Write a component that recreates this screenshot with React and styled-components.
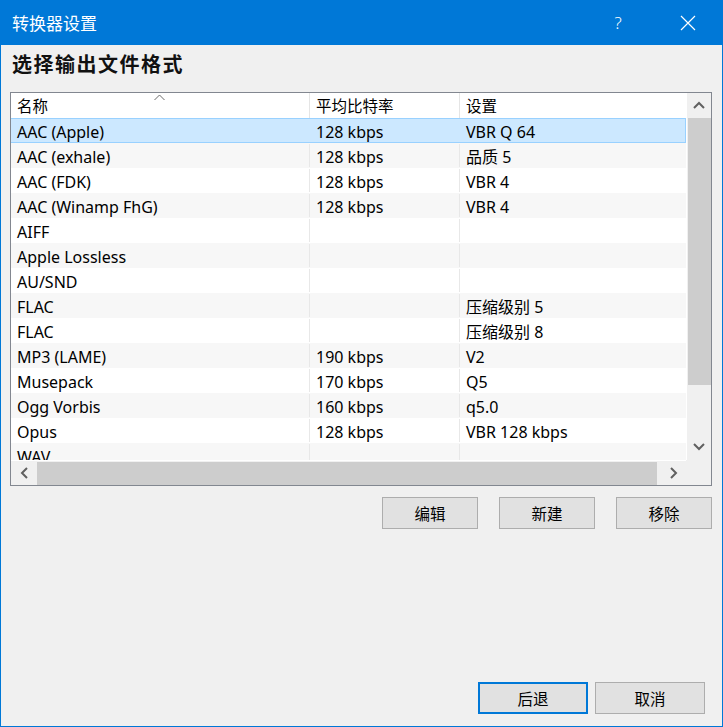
import React from 'react'
import styled, { createGlobalStyle } from 'styled-components'

const GlobalStyle = createGlobalStyle`
  html, body {
    margin: 0;
    padding: 0;
    background: #f0f0f0;
  }
  body {
    font-family: "Noto Sans", "Noto Sans CJK SC", sans-serif;
    font-size: 16px;
    color: #000;
  }
`

const Window = styled.div`
  width: 723px;
  height: 727px;
  box-sizing: border-box;
  border: 1px solid #0078d7;
  border-top: none;
  background: #f0f0f0;
  display: flex;
  flex-direction: column;
  overflow: hidden;
`

const TitleBar = styled.div`
  height: 45px;
  margin: 0 -1px;
  background: #0078d7;
  color: #fff;
  display: flex;
  align-items: center;
  padding: 0 0 0 12px;
  flex-shrink: 0;
`

const TitleText = styled.div`
  flex: 1;
  font-family: "Noto Sans CJK SC", sans-serif;
  font-size: 17px;
  margin-top: -1px;
`

const TitleBtn = styled.div`
  width: ${p => p.w}px;
  height: 45px;
  display: flex;
  align-items: center;
  justify-content: center;
  font-family: "Noto Sans", sans-serif;
  font-size: 17px;
  font-weight: 300;
  color: #fff;
`

const Body = styled.div`
  flex: 1;
  display: flex;
  flex-direction: column;
  padding: 0 11px 0 9px;
`

const Heading = styled.div`
  font-family: "Noto Sans CJK SC", sans-serif;
  font-weight: 700;
  font-size: 20px;
  letter-spacing: 1.5px;
  height: 47px;
  box-sizing: border-box;
  padding: 0 0 10px 2px;
  display: flex;
  align-items: center;
  color: #111;
`

const ListBox = styled.div`
  width: 702px;
  height: 394px;
  box-sizing: border-box;
  border: 1px solid #828790;
  background: #fff;
  display: grid;
  grid-template-columns: 675px 25px;
  grid-template-rows: 367px 25px;
`

const Viewport = styled.div`
  overflow: hidden;
`

const Row = styled.div`
  display: grid;
  grid-template-columns: 299px 150px 226px;
  height: 25px;
  box-sizing: border-box;
  background: ${p => (p.selected ? '#cce8ff' : p.alt ? '#f7f7f7' : '#fff')};
  border: 1px solid ${p => (p.selected ? '#99d1ff' : 'transparent')};
  border-left: none;
`

const HeaderRow = styled(Row)`
  background: #fff;
  border: none;
`

const Cell = styled.div`
  display: flex;
  align-items: center;
  padding: 3px 0 0 6px;
  white-space: nowrap;
  line-height: 1;
  border-right: 1px solid ${p => (p.last || p.selected ? 'transparent' : '#e8e8e8')};
`

const HeadCell = styled(Cell)`
  position: relative;
  font-family: "Noto Sans CJK SC", sans-serif;
  font-size: 15.5px;
  border-right-color: ${p => (p.last ? 'transparent' : '#e5e5e5')};
  padding-top: 1px;
`

const SortCaret = styled.svg`
  position: absolute;
  left: 143px;
  top: 1px;
`

const VScroll = styled.div`
  background: #f0f0f0;
  display: flex;
  flex-direction: column;
  align-items: center;
  border-left: 1px solid #fff;
`

const ScrollArrow = styled.div`
  width: 23px;
  height: ${p => p.h || 25}px;
  display: flex;
  align-items: center;
  justify-content: center;
  flex-shrink: 0;
`

const VTrack = styled.div`
  flex: 1;
  width: 23px;
  display: flex;
  flex-direction: column;
`

const VThumb = styled.div`
  width: 23px;
  height: 267px;
  background: #cdcdcd;
`

const HScroll = styled.div`
  background: #f0f0f0;
  display: flex;
  align-items: center;
  border-top: 1px solid #fff;
`

const HArrow = styled.div`
  width: 26px;
  height: 23px;
  display: flex;
  align-items: center;
  justify-content: center;
  flex-shrink: 0;
`

const HTrack = styled.div`
  flex: 1;
  height: 23px;
  display: flex;
`

const HThumb = styled.div`
  width: 620px;
  height: 23px;
  background: #cdcdcd;
`

const Corner = styled.div`
  background: #f0f0f0;
`

const ActionRow = styled.div`
  display: flex;
  justify-content: flex-end;
  gap: 21px;
  margin-top: 11px;
  width: 702px;
`

const Button = styled.button`
  width: ${p => p.w || 96}px;
  height: 32px;
  box-sizing: border-box;
  background: #e1e1e1;
  border: ${p => (p.focused ? '2px solid #0078d7' : '1px solid #adadad')};
  font-family: "Noto Sans CJK SC", sans-serif;
  font-size: 15.5px;
  color: #000;
  padding: 0;
  display: flex;
  align-items: center;
  justify-content: center;
`

const Footer = styled.div`
  margin-top: auto;
  display: flex;
  justify-content: flex-end;
  gap: 7px;
  padding: 0 6px 12px 0;
`

const Chevron = ({ dir }) => {
  const paths = {
    up: 'M1 7 L6 2 L11 7',
    down: 'M1 2 L6 7 L11 2',
    left: 'M7 1 L2 6 L7 11',
    right: 'M2 1 L7 6 L2 11'
  }
  const vertical = dir === 'up' || dir === 'down'
  return (
    <svg width={vertical ? 12 : 9} height={vertical ? 9 : 12} viewBox={vertical ? '0 0 12 9' : '0 0 9 12'}>
      <path d={paths[dir]} fill="none" stroke="#606060" strokeWidth="2" />
    </svg>
  )
}

const formats = [
  ['AAC (Apple)', '128 kbps', 'VBR Q 64'],
  ['AAC (exhale)', '128 kbps', '品质 5'],
  ['AAC (FDK)', '128 kbps', 'VBR 4'],
  ['AAC (Winamp FhG)', '128 kbps', 'VBR 4'],
  ['AIFF', '', ''],
  ['Apple Lossless', '', ''],
  ['AU/SND', '', ''],
  ['FLAC', '', '压缩级别 5'],
  ['FLAC', '', '压缩级别 8'],
  ['MP3 (LAME)', '190 kbps', 'V2'],
  ['Musepack', '170 kbps', 'Q5'],
  ['Ogg Vorbis', '160 kbps', 'q5.0'],
  ['Opus', '128 kbps', 'VBR 128 kbps'],
  ['WAV', '', '']
]

export default function App () {
  return (
    <Window>
      <GlobalStyle />
      <TitleBar>
        <TitleText>转换器设置</TitleText>
        <TitleBtn w={70}>?</TitleBtn>
        <TitleBtn w={70}>
          <svg width="16" height="16" viewBox="0 0 16 16">
            <path d="M1 1 L15 15 M15 1 L1 15" stroke="#fff" strokeWidth="1.2" />
          </svg>
        </TitleBtn>
      </TitleBar>
      <Body>
        <Heading>选择输出文件格式</Heading>
        <ListBox>
          <Viewport>
            <HeaderRow>
              <HeadCell>
                名称
                <SortCaret width="11" height="7" viewBox="0 0 11 7">
                  <path d="M0.5 6 L5.5 1 L10.5 6" fill="none" stroke="#6a6a6a" strokeWidth="1" />
                </SortCaret>
              </HeadCell>
              <HeadCell>平均比特率</HeadCell>
              <HeadCell last>设置</HeadCell>
            </HeaderRow>
            {formats.map(([name, rate, setting], i) => (
              <Row key={i} selected={i === 0} alt={i % 2 === 1}>
                <Cell selected={i === 0}>{name}</Cell>
                <Cell selected={i === 0}>{rate}</Cell>
                <Cell last>{setting}</Cell>
              </Row>
            ))}
          </Viewport>
          <VScroll>
            <ScrollArrow h={25}><Chevron dir="up" /></ScrollArrow>
            <VTrack><VThumb /></VTrack>
            <ScrollArrow h={27}><Chevron dir="down" /></ScrollArrow>
          </VScroll>
          <HScroll>
            <HArrow><Chevron dir="left" /></HArrow>
            <HTrack><HThumb /></HTrack>
            <HArrow><Chevron dir="right" /></HArrow>
          </HScroll>
          <Corner />
        </ListBox>
        <ActionRow>
          <Button>编辑</Button>
          <Button>新建</Button>
          <Button>移除</Button>
        </ActionRow>
        <Footer>
          <Button w={110} focused>后退</Button>
          <Button w={110}>取消</Button>
        </Footer>
      </Body>
    </Window>
  )
}
